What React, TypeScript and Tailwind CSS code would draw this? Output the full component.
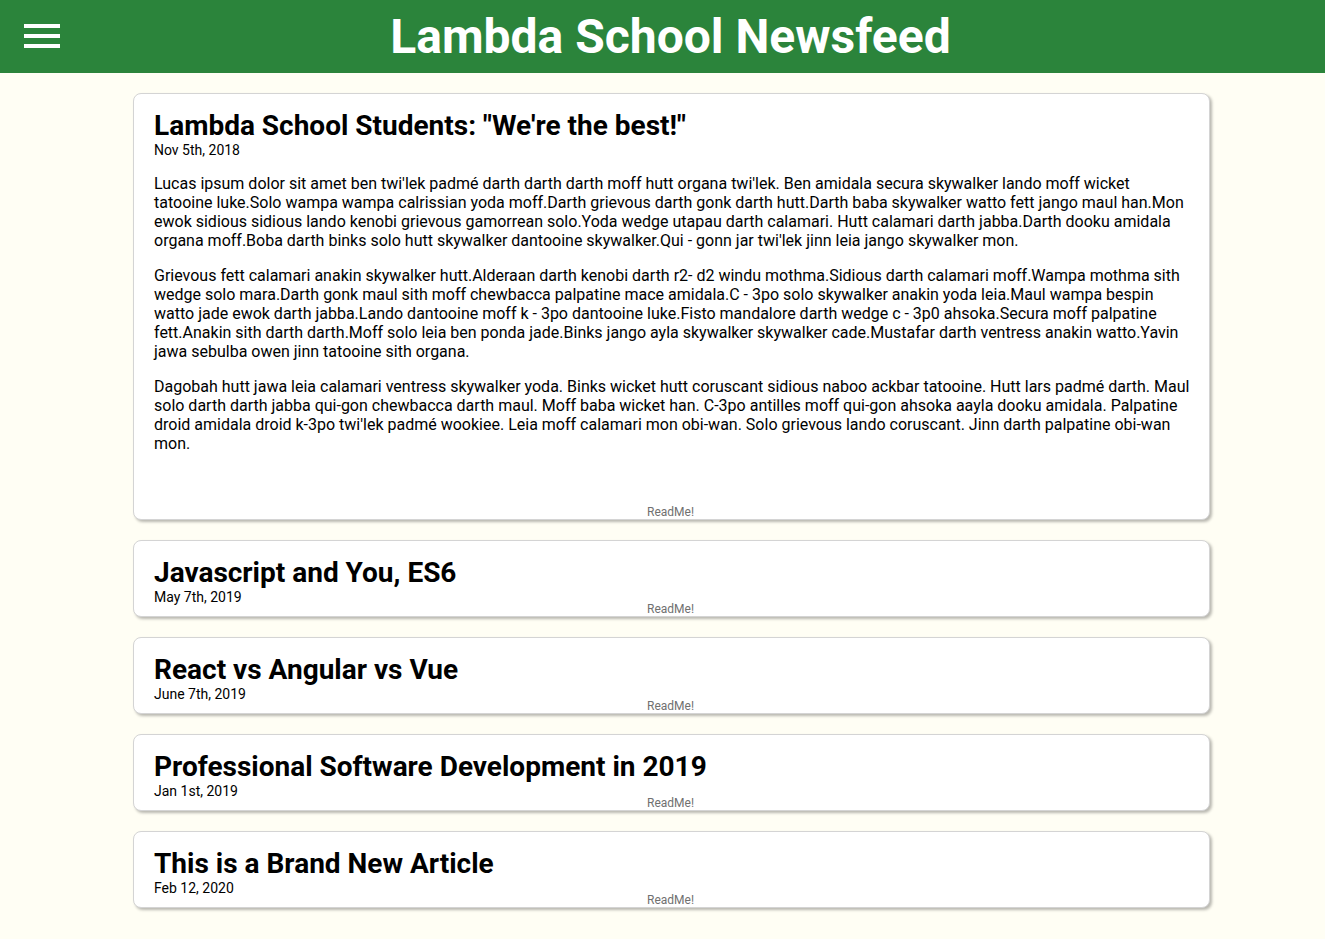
import React from "react";

const p1 =
  "Lucas ipsum dolor sit amet ben twi'lek padmé darth darth darth moff hutt organa twi'lek. Ben amidala secura skywalker lando moff wicket tatooine luke.Solo wampa wampa calrissian yoda moff.Darth grievous darth gonk darth hutt.Darth baba skywalker watto fett jango maul han.Mon ewok sidious sidious lando kenobi grievous gamorrean solo.Yoda wedge utapau darth calamari. Hutt calamari darth jabba.Darth dooku amidala organa moff.Boba darth binks solo hutt skywalker dantooine skywalker.Qui - gonn jar twi'lek jinn leia jango skywalker mon.";
const p2 =
  "Grievous fett calamari anakin skywalker hutt.Alderaan darth kenobi darth r2- d2 windu mothma.Sidious darth calamari moff.Wampa mothma sith wedge solo mara.Darth gonk maul sith moff chewbacca palpatine mace amidala.C - 3po solo skywalker anakin yoda leia.Maul wampa bespin watto jade ewok darth jabba.Lando dantooine moff k - 3po dantooine luke.Fisto mandalore darth wedge c - 3p0 ahsoka.Secura moff palpatine fett.Anakin sith darth darth.Moff solo leia ben ponda jade.Binks jango ayla skywalker skywalker cade.Mustafar darth ventress anakin watto.Yavin jawa sebulba owen jinn tatooine sith organa.";
const p3 =
  "Dagobah hutt jawa leia calamari ventress skywalker yoda. Binks wicket hutt coruscant sidious naboo ackbar tatooine. Hutt lars padmé darth. Maul solo darth darth jabba qui-gon chewbacca darth maul. Moff baba wicket han. C-3po antilles moff qui-gon ahsoka aayla dooku amidala. Palpatine droid amidala droid k-3po twi'lek padmé wookiee. Leia moff calamari mon obi-wan. Solo grievous lando coruscant. Jinn darth palpatine obi-wan mon.";

type Article = { title: string; date: string; open?: boolean; paras: string[] };

const articles: Article[] = [
  { title: 'Lambda School Students: "We\'re the best!"', date: "Nov 5th, 2018", open: true, paras: [p1, p2, p3] },
  { title: "Javascript and You, ES6", date: "May 7th, 2019", paras: [p1, p2, p3] },
  { title: "React vs Angular vs Vue", date: "June 7th, 2019", paras: [p1, p2, p3] },
  { title: "Professional Software Development in 2019", date: "Jan 1st, 2019", paras: [p1, p2, p3] },
  { title: "This is a Brand New Article", date: "Feb 12, 2020", paras: [p1, p2, p3] },
];

function Card({ a }: { a: Article }) {
  return (
    <div
      className={`relative overflow-hidden bg-white border border-[#d4d4d4] rounded-[8px] shadow-[2px_2px_3px_rgba(0,0,0,0.28)] pl-[20px] pr-[17px] pt-[15px] ${
        a.open ? "h-[427px]" : "h-[77px]"
      }`}
    >
      <h2 className="text-[28px] font-bold leading-[33px] text-black">{a.title}</h2>
      <p className="text-[14px] leading-[16px] text-black">{a.date}</p>
      {a.open &&
        a.paras.map((t, i) => (
          <p key={i} className="mt-[16px] text-[16px] leading-[19px] text-black">
            {t}
          </p>
        ))}
      <span className="absolute bottom-0 left-0 right-0 text-center text-[12px] leading-[14px] text-[#707070] pr-[2px]">
        ReadMe!
      </span>
    </div>
  );
}

export default function App() {
  return (
    <div className="min-h-[939px] bg-[#fffef4]" style={{ fontFamily: "Roboto, 'Liberation Sans', sans-serif" }}>
      <header className="relative h-[73px] bg-[#2b843b] flex items-center justify-center pl-[16px]">
        <div className="absolute left-[24px] top-[24px] flex flex-col gap-[6px]">
          <span className="block w-[36px] h-[4px] bg-white" />
          <span className="block w-[36px] h-[4px] bg-white" />
          <span className="block w-[36px] h-[4px] bg-white" />
        </div>
        <h1 className="text-[48px] font-bold text-white leading-none">Lambda School Newsfeed</h1>
      </header>
      <main className="flex flex-col gap-[20px] pt-[20px] pb-[31px] ml-[133px] w-[1077px]">
        {articles.map((a, i) => (
          <Card key={i} a={a} />
        ))}
      </main>
    </div>
  );
}
